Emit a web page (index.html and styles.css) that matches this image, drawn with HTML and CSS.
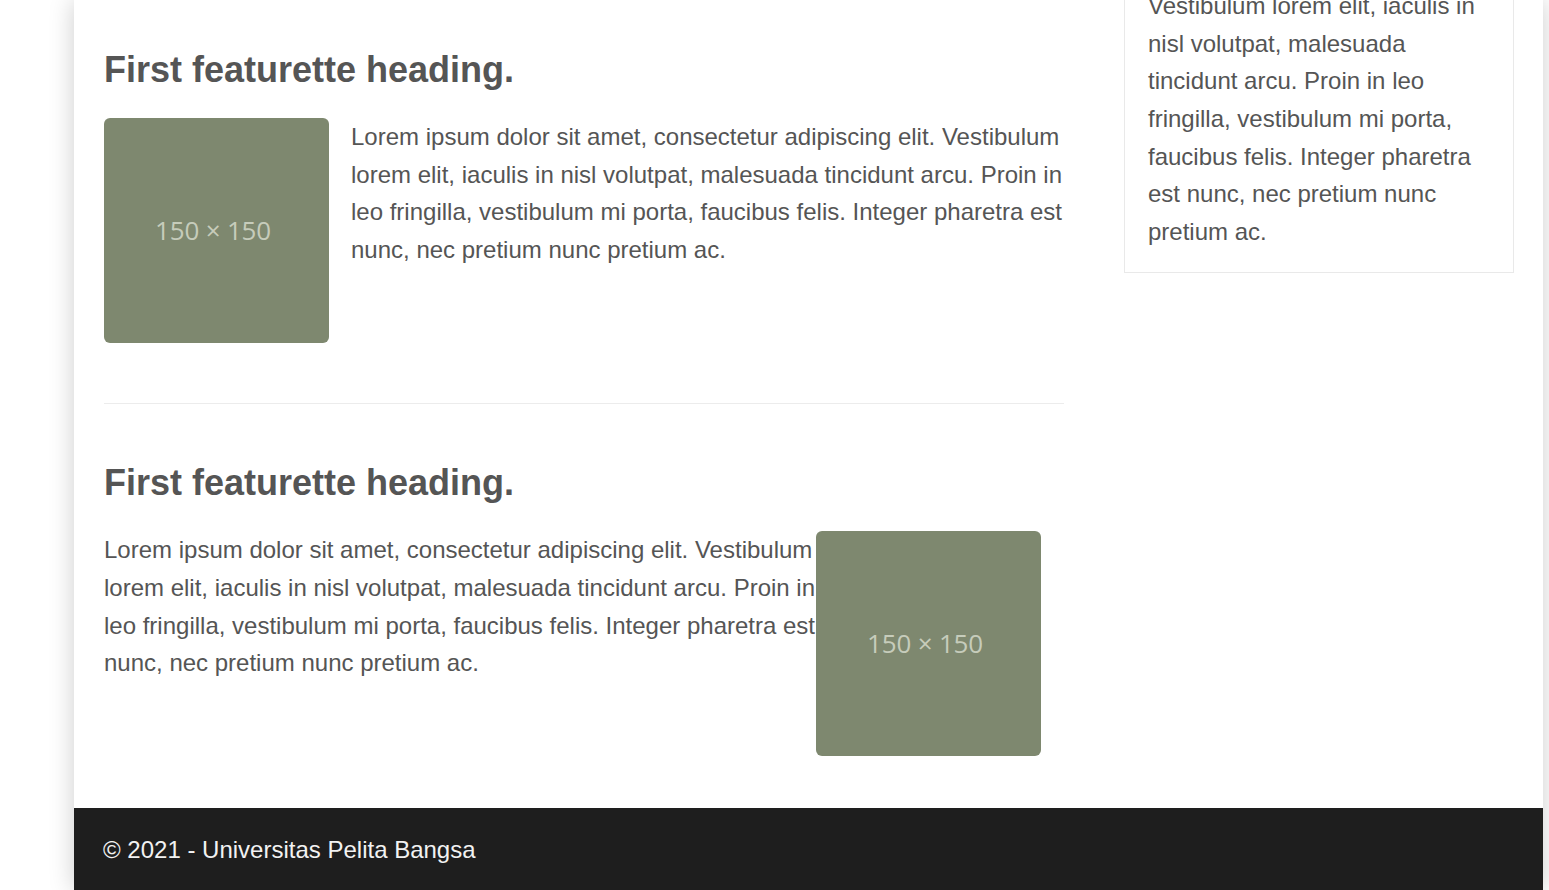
FILE: index.html
```html
<!DOCTYPE html>
<html lang="id">
<head>
<meta charset="utf-8">
<title>Universitas Pelita Bangsa</title>
<link rel="stylesheet" href="styles.css">
</head>
<body>
<div class="page">
  <div class="layout">
    <main class="main">
      <section class="featurette first">
        <h2 class="featurette-heading">First featurette heading.</h2>
        <div class="featurette-body">
          <div class="placeholder"><span>150 × 150</span></div>
          <p class="lead-text">Lorem ipsum dolor sit amet, consectetur adipiscing elit. Vestibulum lorem elit, iaculis in nisl volutpat, malesuada tincidunt arcu. Proin in leo fringilla, vestibulum mi porta, faucibus felis. Integer pharetra est nunc, nec pretium nunc pretium ac.</p>
        </div>
      </section>
      <hr class="divider">
      <section class="featurette">
        <h2 class="featurette-heading">First featurette heading.</h2>
        <div class="featurette-body reverse">
          <p class="lead-text">Lorem ipsum dolor sit amet, consectetur adipiscing elit. Vestibulum lorem elit, iaculis in nisl volutpat, malesuada tincidunt arcu. Proin in leo fringilla, vestibulum mi porta, faucibus felis. Integer pharetra est nunc, nec pretium nunc pretium ac.</p>
          <div class="placeholder"><span>150 × 150</span></div>
        </div>
      </section>
    </main>
    <aside class="sidebar">
      <div class="card">
        <p class="lead-text">Lorem ipsum dolor sit amet, consectetur adipiscing elit. Vestibulum lorem elit, iaculis in nisl volutpat, malesuada tincidunt arcu. Proin in leo fringilla, vestibulum mi porta, faucibus felis. Integer pharetra est nunc, nec pretium nunc pretium ac.</p>
      </div>
    </aside>
  </div>
  <footer class="footer">© 2021 - Universitas Pelita Bangsa</footer>
</div>
</body>
</html>
```
FILE: styles.css
```css
html, body {
  margin: 0;
  padding: 0;
  background: #ffffff;
  overflow: hidden;
  height: 890px;
}

body {
  font-family: "Liberation Sans", Arial, sans-serif;
  color: #555555;
}

.page {
  margin-left: 74px;
  width: 1469px;
  background: #ffffff;
  box-shadow: 0 0 24px rgba(0, 0, 0, 0.2);
}

.layout {
  display: flex;
  gap: 60px;
  padding: 0 29px 52px 30px;
}

.main {
  width: 960px;
  flex: none;
}

.featurette.first {
  padding-top: 48px;
}

.featurette-heading {
  margin: 0 0 27px;
  font-size: 36px;
  line-height: 1.2;
  font-weight: 700;
  color: #555555;
}

.featurette-body {
  display: flex;
  align-items: flex-start;
  gap: 22px;
}

.featurette-body.reverse {
  gap: 0;
}

.featurette-body.reverse .placeholder {
  margin-right: 23px;
}

.placeholder {
  flex: none;
  box-sizing: border-box;
  width: 225px;
  height: 225px;
  padding: 0 7px 2px 0;
  border-radius: 6px;
  background: #7e886f;
  display: flex;
  align-items: center;
  justify-content: center;
}

.placeholder span {
  font-family: "Open Sans", sans-serif;
  font-size: 26px;
  color: #c6ccbb;
  letter-spacing: -0.2px;
}

.lead-text {
  margin: 0;
  font-size: 24px;
  line-height: 37.6px;
  color: #555555;
}

.featurette-body .lead-text {
  flex: 1;
  min-width: 0;
}

.divider {
  margin: 60px 0 57px;
  border: 0;
  border-top: 1px solid #ececec;
  height: 0;
}

.sidebar {
  width: 390px;
  flex: none;
}

.card {
  margin-top: -111px;
  border: 1px solid #e9e9e9;
  padding: 22px 22px 22px 23px;
}

.footer {
  background: #1e1e1e;
  color: #f2f2f2;
  font-size: 24px;
  line-height: 28px;
  padding: 28px 29px 26px;
}
```
